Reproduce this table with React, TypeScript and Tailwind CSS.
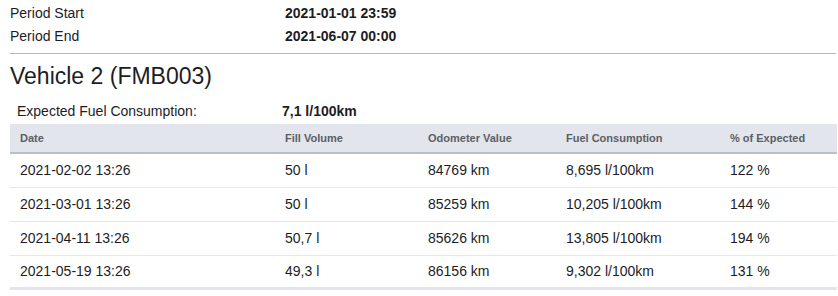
const rows = [
  ["2021-02-02 13:26", "50 l", "84769 km", "8,695 l/100km", "122 %"],
  ["2021-03-01 13:26", "50 l", "85259 km", "10,205 l/100km", "144 %"],
  ["2021-04-11 13:26", "50,7 l", "85626 km", "13,805 l/100km", "194 %"],
  ["2021-05-19 13:26", "49,3 l", "86156 km", "9,302 l/100km", "131 %"],
];

const cols = "grid grid-cols-[265px_143px_138px_164px_117px]";

export default function App() {
  return (
    <div className="w-[838px] h-[296px] bg-white overflow-hidden text-[#1d1d1f] font-['Liberation_Sans',Arial,sans-serif]">
      {/* Period */}
      <div className="pl-[10px] pt-[2px] text-[14px]">
        <div className="grid grid-cols-[275px_1fr] h-[23px] items-center">
          <span>Period Start</span>
          <span className="font-bold">2021-01-01 23:59</span>
        </div>
        <div className="grid grid-cols-[275px_1fr] h-[23px] items-center">
          <span>Period End</span>
          <span className="font-bold">2021-06-07 00:00</span>
        </div>
      </div>
      <div className="ml-[10px] mr-[2px] mt-[5px] border-t border-[#b3b8c0]" />

      <h2 className="pl-[10px] h-[44px] flex items-center text-[23px] leading-none">Vehicle 2 (FMB003)</h2>

      <div className="pl-[17px] h-[26px] grid grid-cols-[265px_1fr] items-center text-[14px]">
        <span>Expected Fuel Consumption:</span>
        <span className="font-bold">7,1 l/100km</span>
      </div>

      {/* Table */}
      <div className="ml-[10px] mr-[1px] text-[14px]">
        <div className={`${cols} h-[30px] items-center bg-[#e2e5eb] border-b-2 border-[#b9c0ca] text-[11px] font-bold text-[#5a5f67]`}>
          <span className="pl-[10px]">Date</span>
          <span className="pl-[10px]">Fill Volume</span>
          <span className="pl-[10px]">Odometer Value</span>
          <span className="pl-[10px]">Fuel Consumption</span>
          <span className="pl-[10px]">% of Expected</span>
        </div>
        {rows.map((r, i) => (
          <div
            key={i}
            className={`${cols} h-[34px] items-center ${i === rows.length - 1 ? "border-b-[3px] border-[#e2e5eb]" : "border-b border-[#e4e7ec]"}`}
          >
            {r.map((c, j) => (
              <span key={j} className="pl-[10px]">{c}</span>
            ))}
          </div>
        ))}
      </div>
    </div>
  );
}
